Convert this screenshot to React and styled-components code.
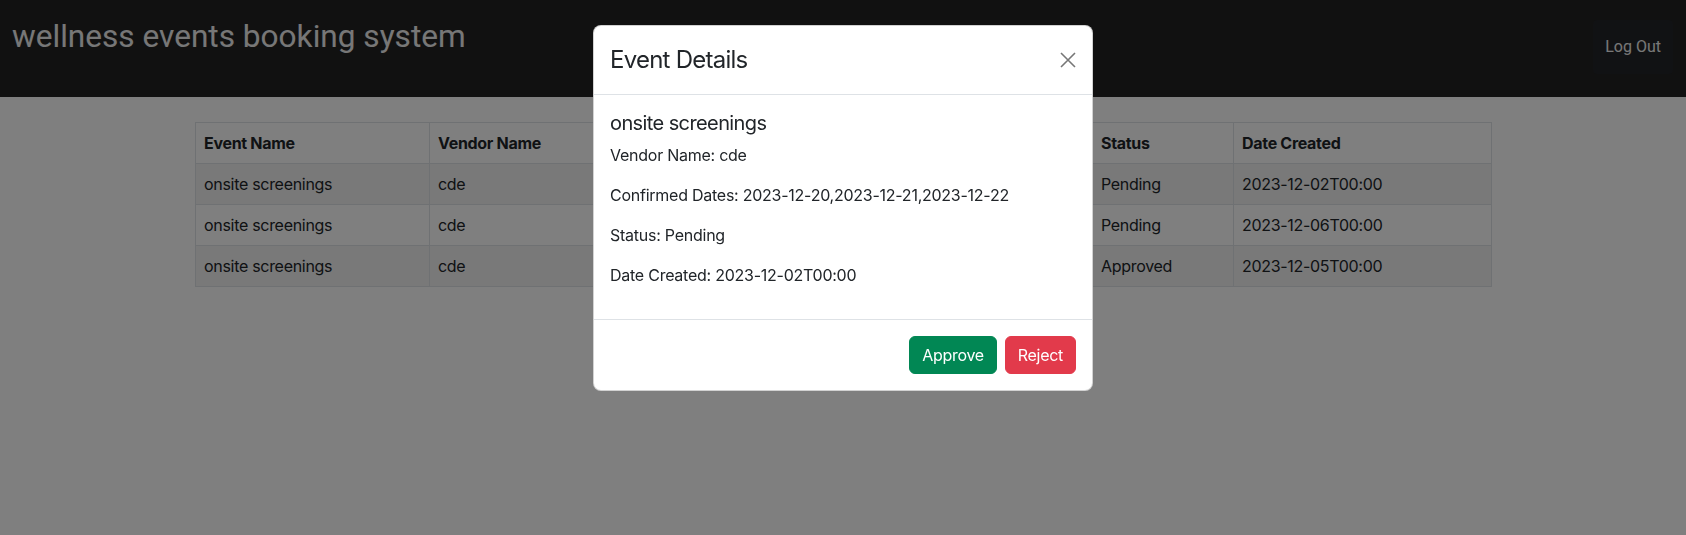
import styled, { createGlobalStyle } from "styled-components";

const GlobalStyle = createGlobalStyle`
  body {
    margin: 0;
    font-family: Inter, "Noto Sans", sans-serif;
    font-size: 16px;
    line-height: 1.5;
    letter-spacing: -0.25px;
    color: #212529;
    background: #ffffff;
  }
`;

const NavBar = styled.header`
  display: flex;
  justify-content: space-between;
  align-items: flex-start;
  height: 97px;
  padding: 0 13px 0 12px;
  box-sizing: border-box;
  background-color: #222222;
  font-family: Roboto, "Liberation Sans", sans-serif;
  letter-spacing: 0;
`;

const Brand = styled.h1`
  margin: 18px 0 0;
  font-size: 31.6px;
  font-weight: 400;
  line-height: 1.2;
  color: #efefef;
`;

const LogOutButton = styled.button`
  margin-top: 20px;
  padding: 15px 12px;
  border: none;
  border-radius: 4px;
  background-color: #232428;
  color: #f0f0f0;
  font-family: inherit;
  font-size: 16px;
  line-height: 24px;
  cursor: pointer;
`;

const Container = styled.main`
  max-width: 1320px;
  margin: 25px auto 0;
  padding: 0 12px;
  box-sizing: border-box;
`;

const Table = styled.table`
  width: 100%;
  table-layout: fixed;
  border-collapse: collapse;
  color: #212529;
  letter-spacing: -0.3px;
`;

const HeadCell = styled.th`
  padding: 8px;
  border: 1px solid #dee2e6;
  text-align: left;
  font-weight: 700;
  white-space: nowrap;
`;

const Row = styled.tr`
  background-color: ${(p) => (p.$striped ? "#f2f2f2" : "#ffffff")};
`;

const Cell = styled.td`
  padding: 8px;
  border: 1px solid #dee2e6;
  white-space: nowrap;
`;

const Backdrop = styled.div`
  position: fixed;
  inset: 0;
  background-color: rgba(0, 0, 0, 0.5);
`;

const ModalLayer = styled.div`
  position: fixed;
  inset: 0;
  overflow-y: auto;
`;

const Dialog = styled.div`
  width: 500px;
  margin: 25px auto;
  background: #ffffff;
  border: 1px solid rgba(0, 0, 0, 0.175);
  border-radius: 8px;
  box-sizing: border-box;
  overflow: hidden;
`;

const ModalHeader = styled.div`
  display: flex;
  align-items: center;
  justify-content: space-between;
  padding: 16px;
  border-bottom: 1px solid #dee2e6;
`;

const ModalTitle = styled.h4`
  margin: 0;
  font-size: 24px;
  font-weight: 400;
  line-height: 1.5;
  letter-spacing: -0.75px;
`;

const CloseButton = styled.button`
  display: flex;
  align-items: center;
  justify-content: center;
  width: 32px;
  height: 32px;
  padding: 0;
  margin-right: -8px;
  border: none;
  background: transparent;
  color: #777777;
  cursor: pointer;
`;

const ModalBody = styled.div`
  padding: 16px;
`;

const EventTitle = styled.h5`
  margin: 0 0 8px;
  font-size: 20px;
  font-weight: 400;
  line-height: 1.2;
  letter-spacing: -0.6px;
`;

const Detail = styled.p`
  margin: 0 0 16px;
`;

const ModalFooter = styled.div`
  display: flex;
  justify-content: flex-end;
  gap: 8px;
  padding: 16px;
  border-top: 1px solid #dee2e6;
`;

const ActionButton = styled.button`
  padding: 6px 12px;
  border: 1px solid ${(p) => p.$color};
  border-radius: 6px;
  background-color: ${(p) => p.$color};
  color: #ffffff;
  font-family: inherit;
  font-size: 16px;
  line-height: 24px;
  letter-spacing: -0.3px;
  cursor: pointer;
`;

const columns = [
  { label: "Event Name", width: 234 },
  { label: "Vendor Name", width: 234 },
  { label: "Location", width: 234 },
  { label: "Confirmed Date", width: 195 },
  { label: "Status", width: 141 },
  { label: "Date Created", width: 258 },
];

const events = [
  {
    name: "onsite screenings",
    vendor: "cde",
    location: "Singapore",
    proposed: "2023-12-20,2023-12-21,2023-12-22",
    confirmed: "",
    status: "Pending",
    created: "2023-12-02T00:00",
  },
  {
    name: "onsite screenings",
    vendor: "cde",
    location: "Singapore",
    proposed: "2023-12-26,2023-12-27,2023-12-28",
    confirmed: "",
    status: "Pending",
    created: "2023-12-06T00:00",
  },
  {
    name: "onsite screenings",
    vendor: "cde",
    location: "Singapore",
    proposed: "2023-12-14,2023-12-15,2023-12-16",
    confirmed: "2023-12-15",
    status: "Approved",
    created: "2023-12-05T00:00",
  },
];

const CloseIcon = () => (
  <svg width="16" height="16" viewBox="0 0 16 16" fill="none">
    <path d="M1 1L15 15M15 1L1 15" stroke="currentColor" strokeWidth="1.6" />
  </svg>
);

const App = () => {
  const selected = events[0];

  return (
    <>
      <GlobalStyle />
      <NavBar>
        <Brand>wellness events booking system</Brand>
        <LogOutButton>Log Out</LogOutButton>
      </NavBar>
      <Container>
        <Table>
          <colgroup>
            {columns.map((c) => (
              <col key={c.label} style={{ width: c.width }} />
            ))}
          </colgroup>
          <thead>
            <tr>
              {columns.map((c) => (
                <HeadCell key={c.label}>{c.label}</HeadCell>
              ))}
            </tr>
          </thead>
          <tbody>
            {events.map((e, i) => (
              <Row key={e.created} $striped={i % 2 === 0}>
                <Cell>{e.name}</Cell>
                <Cell>{e.vendor}</Cell>
                <Cell>{e.location}</Cell>
                <Cell>{e.confirmed}</Cell>
                <Cell>{e.status}</Cell>
                <Cell>{e.created}</Cell>
              </Row>
            ))}
          </tbody>
        </Table>
      </Container>

      <Backdrop />
      <ModalLayer>
        <Dialog>
          <ModalHeader>
            <ModalTitle>Event Details</ModalTitle>
            <CloseButton aria-label="Close">
              <CloseIcon />
            </CloseButton>
          </ModalHeader>
          <ModalBody>
            <EventTitle>{selected.name}</EventTitle>
            <Detail>Vendor Name: {selected.vendor}</Detail>
            <Detail>Confirmed Dates: {selected.proposed}</Detail>
            <Detail>Status: {selected.status}</Detail>
            <Detail>Date Created: {selected.created}</Detail>
          </ModalBody>
          <ModalFooter>
            <ActionButton $color="#018754">Approve</ActionButton>
            <ActionButton $color="#e23a4b">Reject</ActionButton>
          </ModalFooter>
        </Dialog>
      </ModalLayer>
    </>
  );
};

export default App;
